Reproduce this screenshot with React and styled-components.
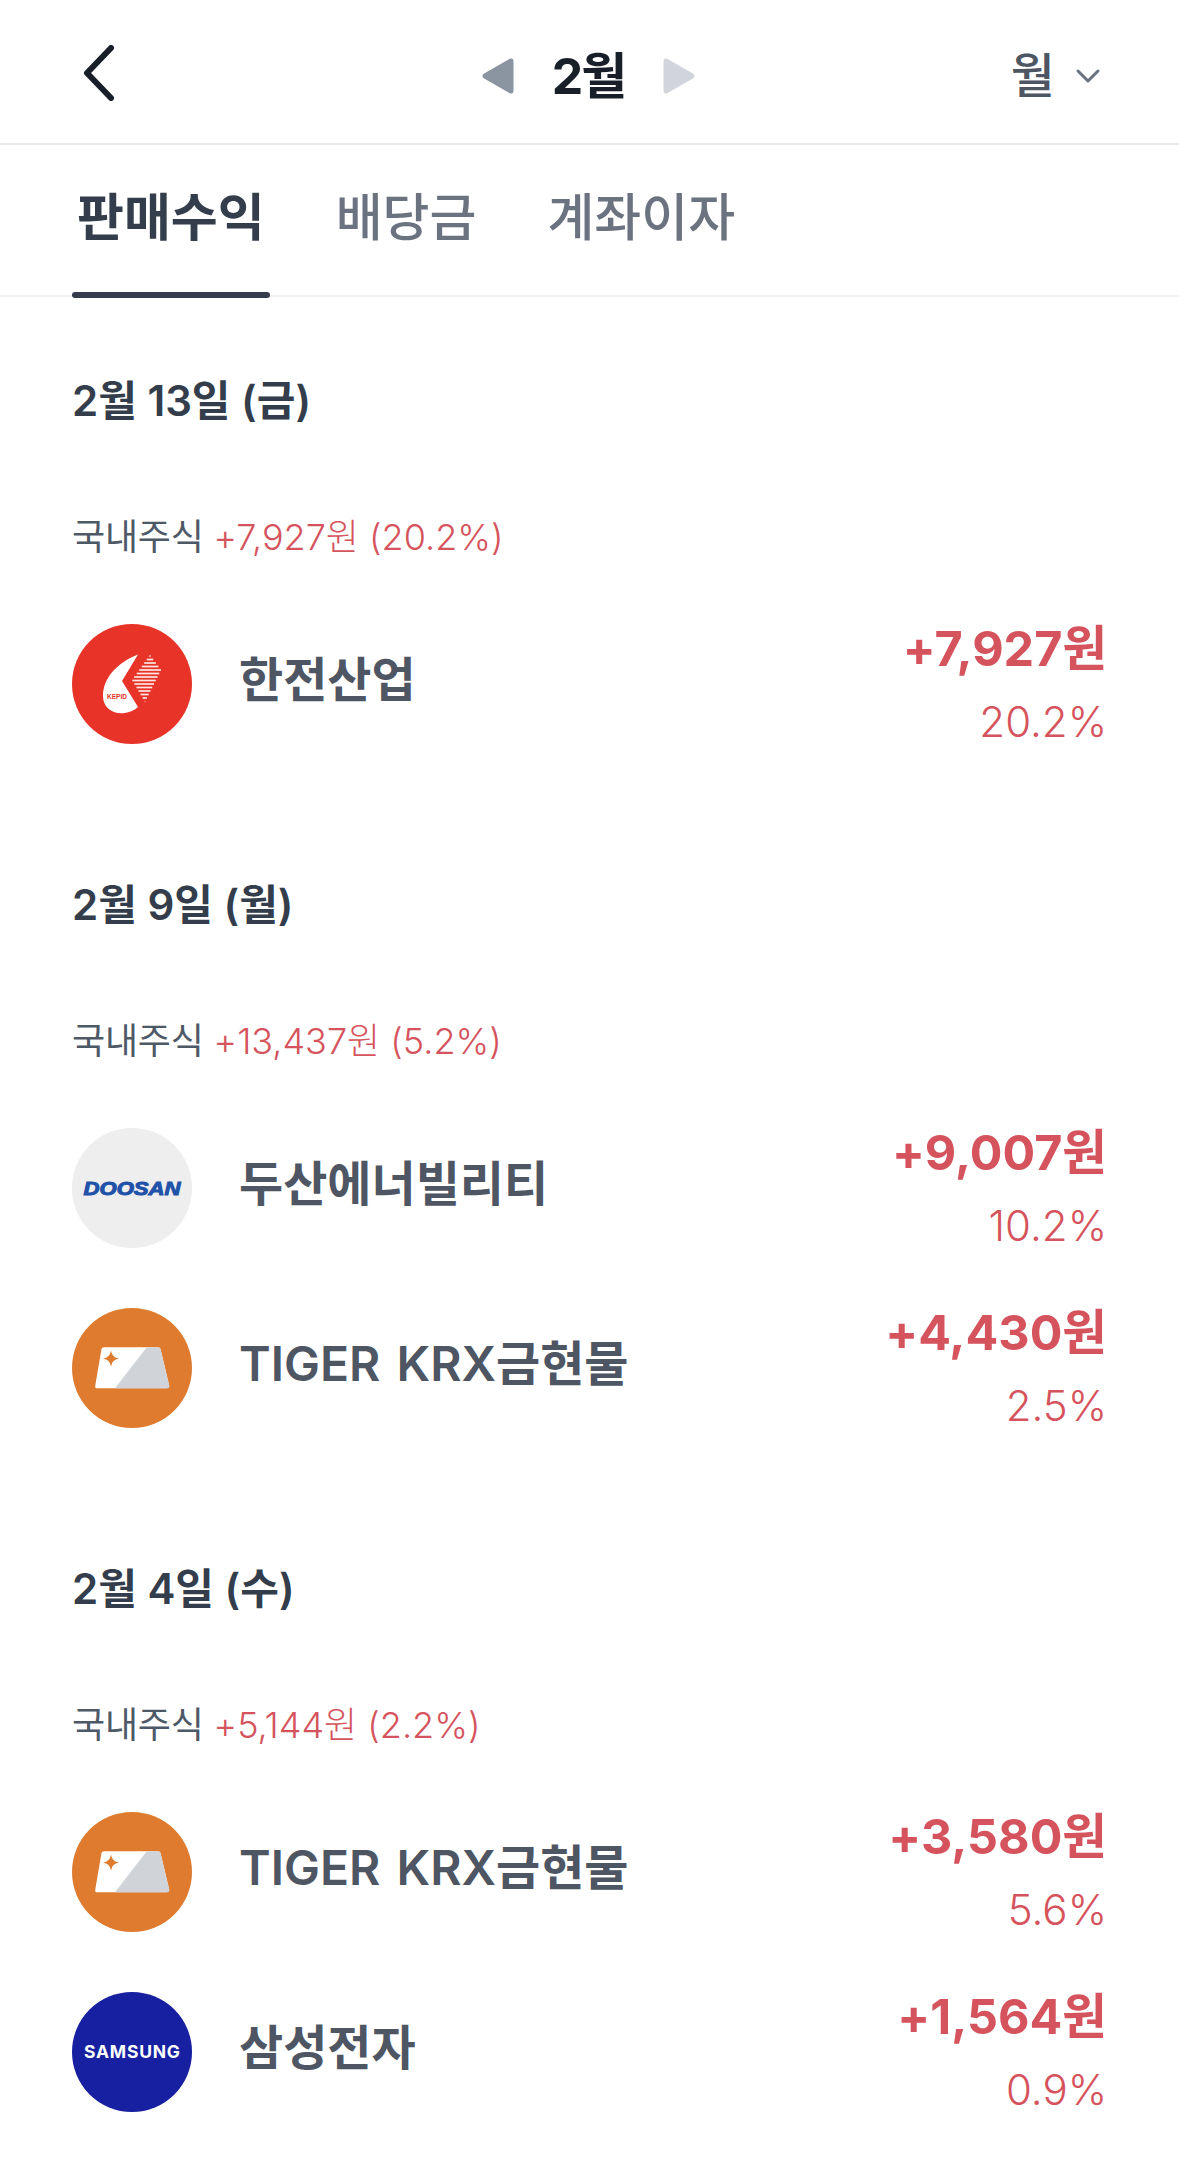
import React from "react";
import styled, { createGlobalStyle } from "styled-components";

const Global = createGlobalStyle`
  html, body { margin: 0; padding: 0; background: #fff; }
  body { font-family: Inter, "Noto Sans CJK KR", sans-serif; }
`;
const Page = styled.div`
  width: 1179px;
  height: 2174px;
  overflow: hidden;
  background: #fff;
`;
const Header = styled.header`
  box-sizing: border-box;
  border-bottom: 2px solid #e9eaec;
  height: 145px;
  padding: 8px 78px 0 80px;
  display: grid;
  grid-template-columns: 1fr auto 1fr;
  align-items: center;
`;
const BackIcon = styled.svg`
  width: 40px;
  height: 56px;
  display: block;
  margin-top: -5px;
`;
const MonthNav = styled.div`
  display: flex;
  align-items: center;
  gap: 38px;
  margin-right: 4px;
`;
const MonthTitle = styled.div`
  font-size: 50px;
  font-weight: 700;
  line-height: 60px;
  letter-spacing: -2px;
  color: #191f28;
`;
const Period = styled.div`
  justify-self: end;
  display: flex;
  align-items: center;
  gap: 20px;
  font-size: 48px;
  font-weight: 500;
  line-height: 60px;
  color: #4e5563;
`;
const Tabs = styled.nav`
  height: 152px;
  box-sizing: border-box;
  border-bottom: 2px solid #eef0f2;
  padding: 0 72px;
  display: flex;
  gap: 61px;
`;
const Tab = styled.div`
  position: relative;
  padding: 0 5px 12px;
  height: 150px;
  display: flex;
  align-items: center;
  box-sizing: border-box;
  font-size: 51px;
  font-weight: ${(p) => (p.$active ? 700 : 500)};
  color: ${(p) => (p.$active ? "#333d4b" : "#6b7280")};
  ${(p) =>
    p.$active &&
    `&::after {
      content: "";
      position: absolute;
      left: 0;
      right: 0;
      bottom: -3px;
      height: 6px;
      border-radius: 3px;
      background: #333d4b;
    }`}
`;
const Main = styled.main`
  padding: 74px 72px 0;
  display: flex;
  flex-direction: column;
  gap: 131px;
`;
const Section = styled.section``;
const DateTitle = styled.h2`
  margin: 0 0 81px;
  font-size: 42px;
  line-height: 60px;
  font-weight: 600;
  color: #333d4b;
`;
const Summary = styled.div`
  margin-bottom: 62px;
  font-size: 36px;
  line-height: 50px;
  letter-spacing: -0.2px;
  color: #4e5968;
`;
const Red = styled.span`
  color: #d5535c;
  font-weight: 300;
  letter-spacing: 0;
`;
const Rows = styled.div`
  display: flex;
  flex-direction: column;
  gap: 60px;
`;
const Row = styled.div`
  display: flex;
  align-items: center;
  height: 120px;
`;
const Logo = styled.svg`
  width: 120px;
  height: 120px;
  flex: none;
  display: block;
`;
const Name = styled.div`
  margin-left: 47px;
  flex: 1;
  font-size: 48px;
  line-height: 60px;
  font-weight: 600;
  word-spacing: 4px;
  color: #4e5563;
  margin-top: -8px;
`;
const Values = styled.div`
  text-align: right;
  color: #d5535c;
`;
const Amount = styled.div`
  font-size: 48.500px;
  line-height: 60px;
  font-weight: 700;
  margin-top: -2px;
`;
const Rate = styled.div`
  font-size: 42px;
  line-height: 50px;
  margin-top: 18px;
  font-weight: 300;
`;

const lerp = (a, b, t) => a + (b - a) * t;
const stripeEnds = (y) => {
  const left = y < 56 ? lerp(78, 60, (y - 31) / 25) : lerp(60, 73, (y - 56) / 22);
  const right = y < 46 ? lerp(78, 89, (y - 31) / 15) : lerp(89, 73, (y - 46) / 32);
  return [left, right];
};
const stripeYs = Array.from({ length: 14 }, (_, i) => 32 + i * 3.5);

const Kepid = () => (
  <Logo viewBox="0 0 120 120">
    <circle cx="60" cy="60" r="60" fill="#e83428" />
    <path d="M66 30.500 C44 39 31 55 31 72 C31 84 41 90 51 89.300 C57 88.800 62 86.500 66 83 L50 57 Z" fill="#fff" />
    <text x="35" y="75" fontFamily="Liberation Sans, sans-serif" fontSize="8" fontWeight="700" fill="#e83428" textLength="20" lengthAdjust="spacingAndGlyphs">KEPID</text>
    <g stroke="#ffe6e2" strokeWidth="1.700">
      {stripeYs.map((y) => {
        const [a, b] = stripeEnds(y);
        return <line key={y} x1={a} x2={b} y1={y} y2={y} />;
      })}
    </g>
  </Logo>
);
const Doosan = () => (
  <Logo viewBox="0 0 120 120">
    <circle cx="60" cy="60" r="60" fill="#eeeeef" />
    <text x="60" y="66.500" textAnchor="middle" fontFamily="Liberation Sans, sans-serif" fontSize="18.500" fontWeight="700" fontStyle="italic" stroke="#1f52a8" strokeWidth="1" fill="#1f52a8" textLength="97" lengthAdjust="spacingAndGlyphs">DOOSAN</text>
  </Logo>
);
const Gold = () => (
  <Logo viewBox="0 0 120 120">
    <circle cx="60" cy="60" r="60" fill="#df7b2f" />
    <path d="M29.500 41 Q30 39.300 32 39.300 H86 Q88 39.300 88.500 41 L97.300 78 Q97.300 80.300 95 80.300 H25 Q22.800 80.300 23.200 78 Z" fill="#fff" />
    <path d="M74.700 39.300 H86 Q88 39.300 88.500 41 L97.300 78 Q97.300 80.300 95 80.300 H43 Z" fill="#d0d4d9" />
    <path d="M39 42.500 Q40 49.500 47 50.500 Q40 51.500 39 58.500 Q38 51.500 31 50.500 Q38 49.500 39 42.500 Z" fill="#df7b2f" />
  </Logo>
);
const Samsung = () => (
  <Logo viewBox="0 0 120 120">
    <circle cx="60" cy="60" r="60" fill="#1620a0" />
    <text x="60" y="66" textAnchor="middle" fontFamily="Inter, sans-serif" fontSize="17.500" fontWeight="700" fill="#fff" textLength="96" lengthAdjust="spacing">SAMSUNG</text>
  </Logo>
);

const sections = [
  {
    date: "2월 13일 (금)",
    summary: "+7,927원 (20.2%)",
    rows: [{ logo: Kepid, name: "한전산업", amount: "+7,927원", rate: "20.2%" }],
  },
  {
    date: "2월 9일 (월)",
    summary: "+13,437원 (5.2%)",
    rows: [
      { logo: Doosan, name: "두산에너빌리티", amount: "+9,007원", rate: "10.2%" },
      { logo: Gold, name: "TIGER KRX금현물", amount: "+4,430원", rate: "2.5%" },
    ],
  },
  {
    date: "2월 4일 (수)",
    summary: "+5,144원 (2.2%)",
    rows: [
      { logo: Gold, name: "TIGER KRX금현물", amount: "+3,580원", rate: "5.6%" },
      { logo: Samsung, name: "삼성전자", amount: "+1,564원", rate: "0.9%" },
    ],
  },
];

export default function App() {
  return (
    <Page>
      <Global />
      <Header>
        <BackIcon viewBox="0 0 40 56">
          <path d="M31 3 L7 28 L31 53" fill="none" stroke="#191f28" strokeWidth="6" strokeLinecap="round" strokeLinejoin="round" />
        </BackIcon>
        <MonthNav>
          <svg width="32" height="36" viewBox="0 0 32 36">
            <path d="M29 3 L3 18 L29 33 Z" fill="#8b95a1" stroke="#8b95a1" strokeWidth="5" strokeLinejoin="round" />
          </svg>
          <MonthTitle>2월</MonthTitle>
          <svg width="32" height="36" viewBox="0 0 32 36">
            <path d="M3 3 L29 18 L3 33 Z" fill="#d1d5db" stroke="#d1d5db" strokeWidth="5" strokeLinejoin="round" />
          </svg>
        </MonthNav>
        <Period>
          월
          <svg width="26" height="16" viewBox="0 0 26 16">
            <path d="M3 3 L13 13 L23 3" fill="none" stroke="#6b7280" strokeWidth="3" strokeLinecap="round" strokeLinejoin="round" />
          </svg>
        </Period>
      </Header>
      <Tabs>
        <Tab $active>판매수익</Tab>
        <Tab>배당금</Tab>
        <Tab>계좌이자</Tab>
      </Tabs>
      <Main>
        {sections.map((s) => (
          <Section key={s.date}>
            <DateTitle>{s.date}</DateTitle>
            <Summary>
              국내주식 <Red>{s.summary}</Red>
            </Summary>
            <Rows>
              {s.rows.map((r) => (
                <Row key={r.name + r.amount}>
                  <r.logo />
                  <Name>{r.name}</Name>
                  <Values>
                    <Amount>{r.amount}</Amount>
                    <Rate>{r.rate}</Rate>
                  </Values>
                </Row>
              ))}
            </Rows>
          </Section>
        ))}
      </Main>
    </Page>
  );
}
